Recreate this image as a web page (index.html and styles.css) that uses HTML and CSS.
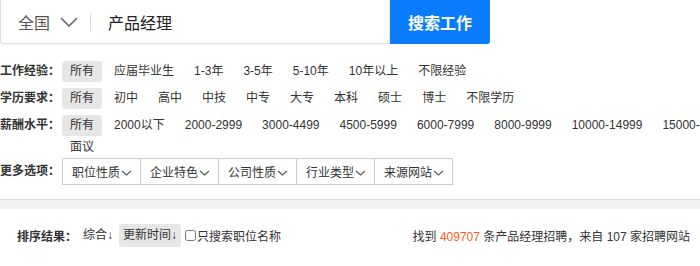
FILE: index.html
```html
<!DOCTYPE html>
<html lang="zh-CN">

<head>
    <meta charset="UTF-8" />
    <title>产品经理招聘</title>
    <link rel="stylesheet" href="styles.css">
</head>

<body>
    <form class="search-bar">
        <div class="search-box">
            <span class="city">全国</span>
            <svg class="city-arrow" width="18" height="10" viewBox="0 0 18 10">
                <polyline points="1,1 9,9 17,1" fill="none" stroke="#666" stroke-width="1.6" />
            </svg>
            <span class="divider"></span>
            <input class="keyword" type="text" value="产品经理" />
        </div>
        <button class="search-btn" type="submit">搜索工作</button>
    </form>

    <div class="filters">
        <div class="filter-row">
            <span class="filter-label">工作经验：</span>
            <ul class="filter-items">
                <li class="active">所有</li>
                <li>应届毕业生</li>
                <li>1-3年</li>
                <li>3-5年</li>
                <li>5-10年</li>
                <li>10年以上</li>
                <li>不限经验</li>
            </ul>
        </div>
        <div class="filter-row">
            <span class="filter-label">学历要求：</span>
            <ul class="filter-items">
                <li class="active">所有</li>
                <li>初中</li>
                <li>高中</li>
                <li>中技</li>
                <li>中专</li>
                <li>大专</li>
                <li>本科</li>
                <li>硕士</li>
                <li>博士</li>
                <li>不限学历</li>
            </ul>
        </div>
        <div class="filter-row filter-row-tight">
            <span class="filter-label">薪酬水平：</span>
            <ul class="filter-items">
                <li class="active">所有</li>
                <li>2000以下</li>
                <li>2000-2999</li>
                <li>3000-4499</li>
                <li>4500-5999</li>
                <li>6000-7999</li>
                <li>8000-9999</li>
                <li>10000-14999</li>
                <li>15000-19999</li>
                <li>20000以上</li>
                <li>面议</li>
            </ul>
        </div>
        <div class="filter-row more-row">
            <span class="filter-label">更多选项：</span>
            <div class="dropdowns">
                <span class="dropdown">职位性质<svg width="11" height="6" viewBox="0 0 11 6"><polyline points="1,1 5.5,5 10,1" fill="none" stroke="#555" stroke-width="1.1" /></svg></span>
                <span class="dropdown">企业特色<svg width="11" height="6" viewBox="0 0 11 6"><polyline points="1,1 5.5,5 10,1" fill="none" stroke="#555" stroke-width="1.1" /></svg></span>
                <span class="dropdown">公司性质<svg width="11" height="6" viewBox="0 0 11 6"><polyline points="1,1 5.5,5 10,1" fill="none" stroke="#555" stroke-width="1.1" /></svg></span>
                <span class="dropdown">行业类型<svg width="11" height="6" viewBox="0 0 11 6"><polyline points="1,1 5.5,5 10,1" fill="none" stroke="#555" stroke-width="1.1" /></svg></span>
                <span class="dropdown">来源网站<svg width="11" height="6" viewBox="0 0 11 6"><polyline points="1,1 5.5,5 10,1" fill="none" stroke="#555" stroke-width="1.1" /></svg></span>
            </div>
        </div>
    </div>

    <div class="band"></div>

    <div class="sort-bar">
        <div class="sort-left">
            <span class="sort-label">排序结果：</span>
            <span class="sort-item">综合↓</span>
            <span class="sort-item active">更新时间↓</span>
            <label class="only-title"><input type="checkbox" />只搜索职位名称</label>
        </div>
        <div class="result-count">
            找到 <span class="count">409707</span> 条产品经理招聘，来自 107 家招聘网站
        </div>
    </div>
</body>

</html>
```

FILE: styles.css
```css
/* 通用 */
html,
body {
    margin: 0;
    overflow: hidden;
}

body {
    font-family: "Liberation Sans", "Noto Sans CJK SC", sans-serif;
    font-size: 12px;
    color: #333;
    background: #fff;
}

ul {
    margin: 0;
    padding: 0;
    list-style: none;
}

/* 搜索栏 */
.search-bar {
    display: flex;
    width: 490px;
    height: 44px;
    margin: 0;
}

.search-box {
    flex: 1;
    display: flex;
    align-items: center;
    border: 1px solid #e2e2e2;
    border-top: none;
    border-radius: 0 0 0 3px;
    box-shadow: 0 1px 3px rgba(0, 0, 0, 0.06);
    padding-left: 17px;
}

.city {
    font-size: 16px;
    color: #555;
}

.city-arrow {
    margin-left: 10px;
}

.divider {
    width: 1px;
    height: 18px;
    background: #ddd;
    margin: 0 17px 0 12px;
}

.keyword {
    flex: 1;
    border: none;
    outline: none;
    font-family: inherit;
    font-size: 16px;
    color: #222;
    padding: 0;
    background: transparent;
}

.search-btn {
    width: 100px;
    border: none;
    border-radius: 0 0 3px 0;
    background: #0a7dff;
    color: #fff;
    font-family: inherit;
    font-size: 16px;
    font-weight: 700;
    cursor: pointer;
}

/* 筛选条件 */
.filters {
    padding-top: 17px;
    padding-bottom: 14px;
}

.filter-row {
    display: flex;
    align-items: flex-start;
    margin-bottom: 6px;
    overflow: hidden;
}

.filter-row-tight {
    margin-bottom: 0;
}

.filter-label {
    flex: none;
    width: 62px;
    line-height: 21px;
    font-weight: 700;
    color: #333;
}

.filter-items {
    flex: none;
    width: 760px;
    display: flex;
    flex-wrap: wrap;
    gap: 1px 4px;
}

.filter-items li {
    line-height: 21px;
    padding: 0 8px;
    border-radius: 3px;
    white-space: nowrap;
    cursor: pointer;
}

.filter-items li.active {
    background: #e6e6e6;
}

.more-row {
    align-items: center;
    margin-bottom: 0;
}

.dropdowns {
    display: flex;
}

.dropdown {
    display: flex;
    align-items: center;
    box-sizing: border-box;
    width: 79px;
    height: 27px;
    padding-left: 9px;
    border: 1px solid #ccc;
    margin-right: -1px;
    color: #333;
    cursor: pointer;
}

.dropdown svg {
    margin-left: 1px;
    margin-top: 3px;
}

/* 分隔条 */
.band {
    height: 9px;
    border-top: 1px solid #dcdcdc;
    background: #f2f2f2;
}

/* 排序栏 */
.sort-bar {
    display: flex;
    justify-content: space-between;
    align-items: center;
    padding: 15px 10px 0 17px;
}

.sort-left {
    display: flex;
    align-items: center;
}

.sort-label {
    font-weight: 700;
    margin-right: 2px;
}

.sort-item {
    line-height: 23px;
    padding: 0 4px;
    border-radius: 3px;
    margin-right: 2px;
}

.sort-item.active {
    background: #e6e6e6;
}

.only-title {
    display: flex;
    align-items: center;
}

.only-title input {
    margin: 0 1px 0 2px;
    width: 11px;
    height: 11px;
}

.count {
    color: #ff5722;
}
```
